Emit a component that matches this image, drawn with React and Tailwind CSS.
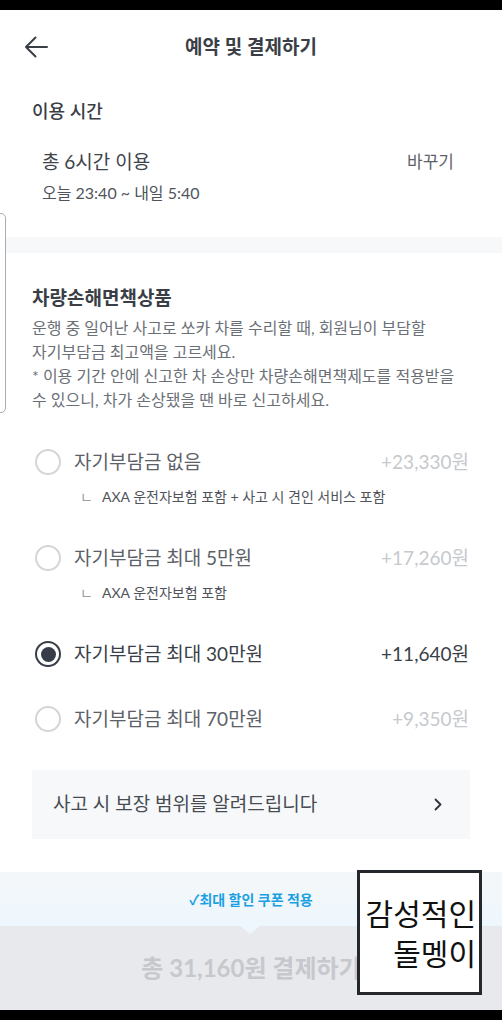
import React from "react";

const options = [
  { label: "자기부담금 없음", price: "+23,330원", sub: "AXA 운전자보험 포함 + 사고 시 견인 서비스 포함" },
  { label: "자기부담금 최대 5만원", price: "+17,260원", sub: "AXA 운전자보험 포함" },
  { label: "자기부담금 최대 30만원", price: "+11,640원", selected: true },
  { label: "자기부담금 최대 70만원", price: "+9,350원" },
];

const Radio = ({ selected }) =>
  selected ? (
    <div className="w-[26px] h-[26px] rounded-full border-[2.5px] border-[#363d48] flex items-center justify-center">
      <div className="w-[15px] h-[15px] rounded-full bg-[#363d48]" />
    </div>
  ) : (
    <div className="w-[26px] h-[26px] rounded-full border-2 border-[#d3d5d9]" />
  );

const Option = ({ label, price, sub, selected }) => (
  <div className={sub ? "pb-[32px]" : "pb-[25px]"}>
    <div className="flex items-center h-[40px] pl-[35px] pr-[33px]">
      <Radio selected={selected} />
      <span className={`ml-[13px] text-[19px] ${selected ? "text-[#3a3f47]" : "text-[#5c6168]"}`}>{label}</span>
      <span className={`ml-auto text-[19px] ${selected ? "text-[#3a3f47]" : "text-[#c6c9ce]"}`}>{price}</span>
    </div>
    {sub && (
      <div className="flex items-center h-[20px] mt-[4px] pl-[80px] text-[14px] text-[#4f545b]">
        <span className="w-[22px] text-[#9a9ea4]">ㄴ</span>
        <span>{sub}</span>
      </div>
    )}
  </div>
);

export default function App() {
  return (
    <div
      className="relative w-[502px] h-[1020px] bg-white overflow-hidden flex flex-col"
      style={{ fontFamily: 'Lato, "Noto Sans CJK KR", sans-serif' }}
    >
      <div className="h-[10px] bg-black shrink-0" />

      {/* header */}
      <div className="relative h-[74px] flex items-center justify-center shrink-0">
        <svg className="absolute left-[24px] top-[26px]" width="24" height="22" viewBox="0 0 24 22" fill="none">
          <path d="M23 11H2M11.5 1.5L2 11l9.5 9.5" stroke="#3a3f47" strokeWidth="2" strokeLinecap="round" strokeLinejoin="round" />
        </svg>
        <span className="text-[19px] font-semibold text-[#3a3f47]">예약 및 결제하기</span>
      </div>

      {/* usage time */}
      <div className="px-8 pt-[13px] pb-[33px]">
        <div className="text-[18px] leading-[28px] font-medium text-[#3a3f47]">이용 시간</div>
        <div className="flex items-center justify-between mt-[23px] pl-[10px] pr-[16px]">
          <span className="text-[19px] leading-[28px] text-[#3f444b]">총 6시간 이용</span>
          <span className="text-[17px] leading-[28px] text-[#5f646b]">바꾸기</span>
        </div>
        <div className="mt-[6px] pl-[10px] text-[16px] leading-[22px] text-[#4f545b]">오늘 23:40 ~ 내일 5:40</div>
      </div>

      <div className="h-[16px] bg-[#f7f8fa] shrink-0" />

      {/* insurance */}
      <div className="px-8 pt-[31px]">
        <div className="text-[19px] leading-[28px] font-bold text-[#3a3f47]">차량손해면책상품</div>
        <div className="mt-[4px] text-[16px] leading-[24px] text-[#6b7077]">
          <p>운행 중 일어난 사고로 쏘카 차를 수리할 때, 회원님이 부담할</p>
          <p>자기부담금 최고액을 고르세요.</p>
          <p>* 이용 기간 안에 신고한 차 손상만 차량손해면책제도를 적용받을</p>
          <p>수 있으니, 차가 손상됐을 땐 바로 신고하세요.</p>
        </div>
      </div>

      <div className="mt-[30px]">
        {options.map((o) => (
          <Option key={o.label} {...o} />
        ))}
      </div>

      <div className="mx-8 mt-[6px] h-[69px] bg-[#f7f8fa] flex items-center pl-[21px] pr-[28px] shrink-0">
        <span className="text-[19px] text-[#474c53]">사고 시 보장 범위를 알려드립니다</span>
        <svg className="ml-auto" width="8" height="13" viewBox="0 0 8 13" fill="none">
          <path d="M1.5 1.5l5 5-5 5" stroke="#2f343b" strokeWidth="1.8" strokeLinecap="round" strokeLinejoin="round" />
        </svg>
      </div>

      <div className="flex-1" />

      {/* bottom */}
      <div className="h-[54px] bg-gradient-to-b from-[#f4f7f9] to-[#eef7fd] flex items-center justify-center shrink-0">
        <span className="text-[14px] font-bold text-[#1ba1e2]">✓최대 할인 쿠폰 적용</span>
      </div>
      <div className="relative h-[84px] bg-[#e8e9ec] flex items-center justify-center shrink-0">
        <div className="absolute left-[240px] top-0 w-0 h-0 border-l-[10px] border-r-[10px] border-t-[8px] border-l-transparent border-r-transparent border-t-[#eef7fd]" />
        <span className="text-[24px] font-bold text-[#c6c8cd]">총 31,160원 결제하기</span>
      </div>
      <div className="h-[10px] bg-black shrink-0" />

      {/* side handle */}
      <div className="absolute left-[-4px] top-[213px] w-[10px] h-[200px] rounded-[5px] border border-[#a9adb2] bg-white" />

      {/* watermark */}
      <div className="absolute left-[357px] top-[870px] w-[125px] h-[125px] border-[3px] border-[#24272b] bg-white flex flex-col items-end justify-center pr-[3px] text-[#111] text-[30px] leading-[40px]">
        <span>감성적인</span>
        <span>돌멩이</span>
      </div>
    </div>
  );
}
